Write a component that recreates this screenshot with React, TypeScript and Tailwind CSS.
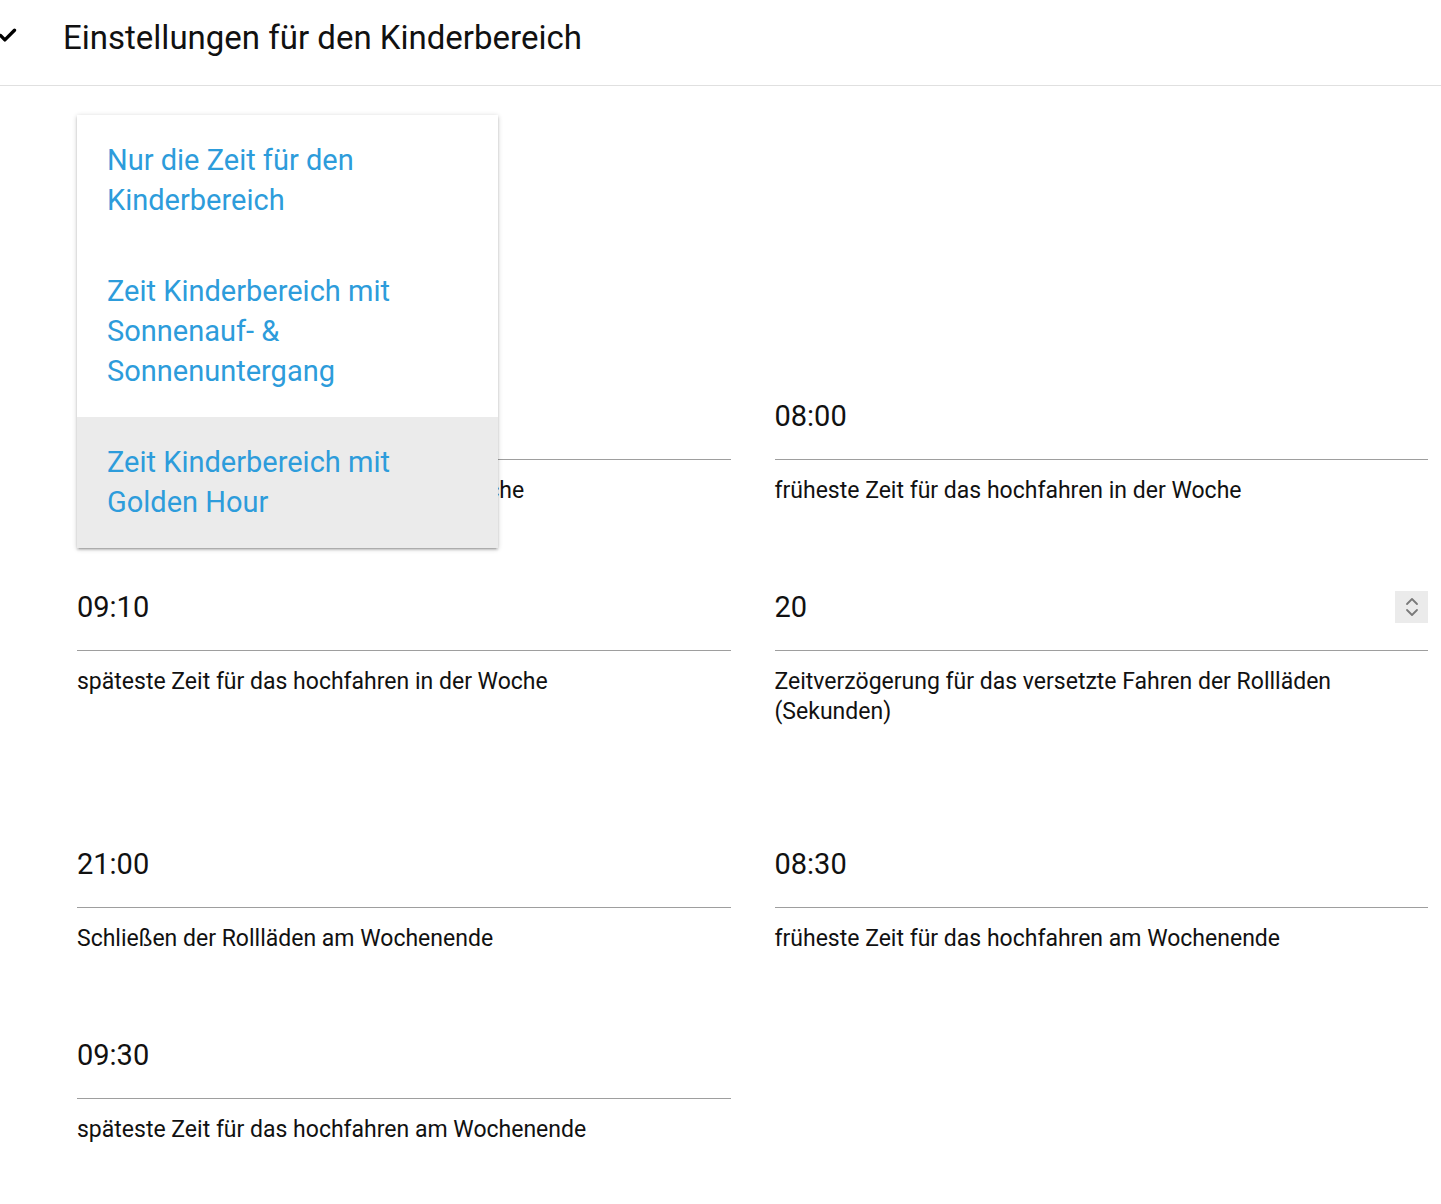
import { Check } from "lucide-react";

type Field = {
  value: string;
  help: React.ReactNode;
  spinner?: boolean;
};

const rows: { fields: (Field | null)[]; helpClass: string }[] = [
  {
    fields: [
      { value: "", help: "Schließen der Rollläden während der Woche" },
      { value: "08:00", help: "früheste Zeit für das hochfahren in der Woche" },
    ],
    helpClass: "",
  },
  {
    fields: [
      { value: "09:10", help: "späteste Zeit für das hochfahren in der Woche" },
      {
        value: "20",
        spinner: true,
        help: (
          <>
            Zeitverzögerung für das versetzte Fahren der Rollläden
            <br />
            (Sekunden)
          </>
        ),
      },
    ],
    helpClass: "min-h-[96px]",
  },
  {
    fields: [
      { value: "21:00", help: "Schließen der Rollläden am Wochenende" },
      { value: "08:30", help: "früheste Zeit für das hochfahren am Wochenende" },
    ],
    helpClass: "",
  },
  {
    fields: [
      { value: "09:30", help: "späteste Zeit für das hochfahren am Wochenende" },
      null,
    ],
    helpClass: "",
  },
];

const options = [
  { label: ["Nur die Zeit für den", "Kinderbereich"], active: false },
  { label: ["Zeit Kinderbereich mit", "Sonnenauf- &", "Sonnenuntergang"], active: false },
  { label: ["Zeit Kinderbereich mit", "Golden Hour"], active: true },
];

function Spinner() {
  return (
    <div className="flex h-[32px] w-[33px] items-center justify-center bg-[#ebebeb]">
      <svg width="16" height="26" viewBox="0 0 16 26" fill="none" stroke="#7a7a7a" strokeWidth="1.8" strokeLinecap="round" strokeLinejoin="round">
        <path d="M3 10 L8 5 L13 10" />
        <path d="M3 16 L8 21 L13 16" />
      </svg>
    </div>
  );
}

function InputField({ field, helpClass }: { field: Field; helpClass: string }) {
  return (
    <div className="flex flex-col">
      <div className="flex h-[66px] items-start justify-between border-b border-[#9e9e9e]">
        <span className="text-[29px] leading-[44px] text-[#111]">{field.value}</span>
        {field.spinner && (
          <div className="mt-[6px]">
            <Spinner />
          </div>
        )}
      </div>
      <p className={`mt-[16px] text-[23px] leading-[30px] text-[#111] ${helpClass}`}>{field.help}</p>
    </div>
  );
}

export default function App() {
  return (
    <div className="relative min-h-[1204px] bg-white font-['Roboto',sans-serif]">
      {/* Header */}
      <div className="flex h-[86px] items-center border-b border-[#e0e0e0]">
        <Check className="ml-[-3px] mt-[-14px] h-[21px] w-[21px] text-black" strokeWidth={3.8} />
        <h1 className="ml-[45px] mt-[-10px] text-[33px] font-normal text-[#111]">
          Einstellungen für den Kinderbereich
        </h1>
      </div>

      {/* Fields */}
      <div className="flex flex-col gap-y-[79px] pl-[77px] pr-[13px] pt-[308px]">
        {rows.map((row, i) => (
          <div key={i} className="grid grid-cols-2 gap-x-[44px]">
            {row.fields.map((f, j) =>
              f ? <InputField key={j} field={f} helpClass={row.helpClass} /> : <div key={j} />
            )}
          </div>
        ))}
      </div>

      {/* Open select dropdown */}
      <ul className="absolute left-[77px] top-[115px] w-[421px] bg-white shadow-[0_2px_2px_0_rgba(0,0,0,0.14),0_3px_1px_-2px_rgba(0,0,0,0.12),0_1px_5px_0_rgba(0,0,0,0.2)]">
        {options.map((o, i) => (
          <li
            key={i}
            className={`px-[30px] pb-[26px] pt-[25px] text-[29px] leading-[40px] text-[#2d9cdb] ${o.active ? "bg-[#ebebeb]" : ""}`}
          >
            {o.label.map((l, k) => (
              <div key={k}>{l}</div>
            ))}
          </li>
        ))}
      </ul>
    </div>
  );
}
